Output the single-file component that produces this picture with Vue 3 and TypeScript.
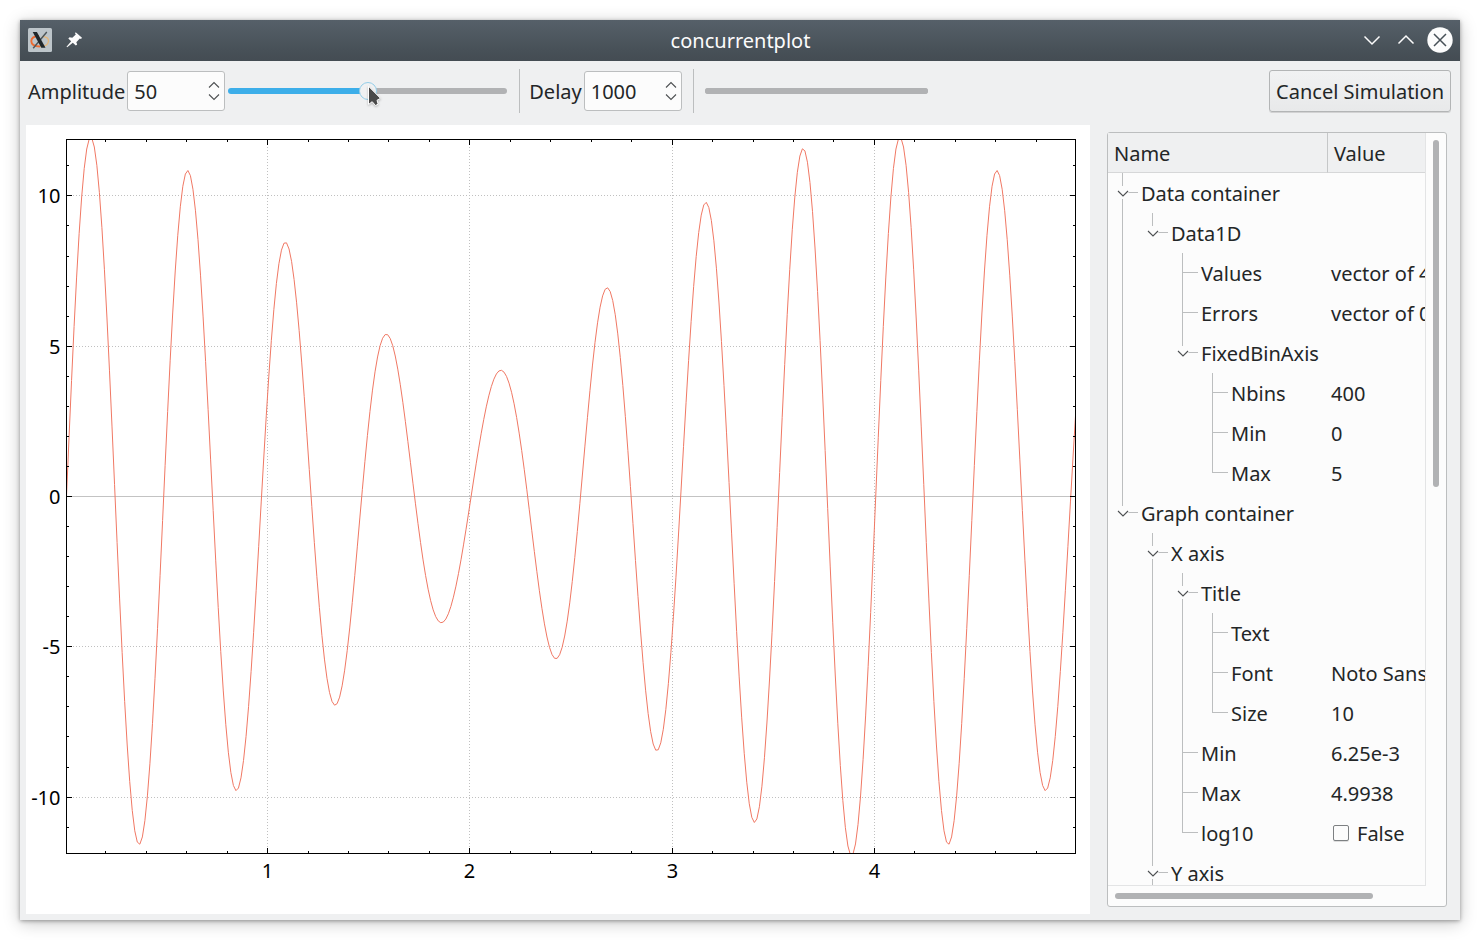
<script setup lang="ts">
import { computed, onBeforeUnmount, onMounted, ref } from 'vue'

interface TreeNode {
  name: string
  value?: string
  check?: boolean
  last?: boolean
  children?: TreeNode[]
}

interface TreeRow {
  name: string
  value: string
  check: boolean
  depth: number
  expandable: boolean
  branches: string
}

const amplitude = ref(50)
const delay = ref(1000)
const log10 = ref(false)

const tree: TreeNode[] = [
  {
    name: 'Data container',
    children: [
      {
        name: 'Data1D',
        last: true,
        children: [
          { name: 'Values', value: 'vector of 400' },
          { name: 'Errors', value: 'vector of 0' },
          {
            name: 'FixedBinAxis',
            last: true,
            children: [
              { name: 'Nbins', value: '400' },
              { name: 'Min', value: '0' },
              { name: 'Max', value: '5', last: true },
            ],
          },
        ],
      },
    ],
  },
  {
    name: 'Graph container',
    last: true,
    children: [
      {
        name: 'X axis',
        children: [
          {
            name: 'Title',
            children: [
              { name: 'Text' },
              { name: 'Font', value: 'Noto Sans' },
              { name: 'Size', value: '10', last: true },
            ],
          },
          { name: 'Min', value: '6.25e-3' },
          { name: 'Max', value: '4.9938' },
          { name: 'log10', value: 'False', check: true, last: true },
        ],
      },
      { name: 'Y axis', children: [] },
    ],
  },
]

const INDENT = 30

function flatten(nodes: TreeNode[], open: boolean[] = []): TreeRow[] {
  return nodes.flatMap((node) => {
    const depth = open.length
    const own = depth * INDENT + 14.5
    const expandable = node.children !== undefined
    let d = ''
    open.forEach((continues, level) => {
      if (continues) d += `M${level * INDENT + 14.5} 0V40`
    })
    if (expandable) {
      d += `M${own} 0V13M${own + 6} 19.5H${own + 15.5}`
      if (!node.last) d += `M${own} 26V40`
    } else {
      d += `M${own} 0V${node.last ? 20 : 40}M${own} 19.5H${own + 15.5}`
    }
    const row: TreeRow = {
      name: node.name,
      value: node.value ?? '',
      check: node.check ?? false,
      depth,
      expandable,
      branches: d,
    }
    return [row, ...flatten(node.children ?? [], [...open, !node.last])]
  })
}

const rows = flatten(tree)

const BINS = 400
const BIN_WIDTH = 0.0125
const X_MIN = 0.00625
const X_MAX = 4.99375
const Y_LIMIT = 11.876

const plot = ref<HTMLElement | null>(null)
const width = ref(1064)
const height = ref(789)
let observer: ResizeObserver | undefined

onMounted(() => {
  observer = new ResizeObserver(([entry]) => {
    width.value = Math.round(entry.contentRect.width)
    height.value = Math.round(entry.contentRect.height)
  })
  if (plot.value) observer.observe(plot.value)
})
onBeforeUnmount(() => observer?.disconnect())

const frame = computed(() => ({
  left: 40.5,
  top: 14.5,
  right: width.value - 14.5,
  bottom: height.value - 60.5,
}))

const px = (x: number) =>
  frame.value.left + ((x - X_MIN) / (X_MAX - X_MIN)) * (frame.value.right - frame.value.left)
const py = (y: number) => {
  const { top, bottom } = frame.value
  return (top + bottom) / 2 - (y / Y_LIMIT) * ((bottom - top) / 2)
}
const crisp = (v: number) => Math.floor(v) + 0.5

const xMajor = computed(() => [1, 2, 3, 4].map((v) => ({ v, at: crisp(px(v)) })))
const yMajor = computed(() => [10, 5, 0, -5, -10].map((v) => ({ v, at: crisp(py(v)) })))

const ticks = computed(() => {
  const { left, top, right, bottom } = frame.value
  let d = ''
  for (let i = 1; i < 25; i++) {
    const at = crisp(px(i / 5))
    const len = i % 5 === 0 ? 5 : 2
    d += `M${at} ${top}v${len + 0.5}M${at} ${bottom}v${-len - 0.5}`
  }
  for (let i = -11; i <= 11; i++) {
    const at = crisp(py(i))
    const len = i % 5 === 0 ? 5 : 2
    d += `M${left} ${at}h${len + 0.5}M${right} ${at}h${-len - 0.5}`
  }
  return d
})

const grid = computed(() => {
  const { left, top, right, bottom } = frame.value
  const vertical = xMajor.value.map((t) => `M${t.at} ${bottom - 0.5}V${top}`)
  const horizontal = yMajor.value.filter((t) => t.v !== 0).map((t) => `M${left + 0.5} ${t.at}H${right}`)
  return [...vertical, ...horizontal].join('')
})

// Values are sampled at the lower edge of each bin and drawn at its centre.
const curve = computed(() => {
  const scale = amplitude.value / 50
  const points: string[] = []
  for (let i = 0; i < BINS; i++) {
    const x = i * BIN_WIDTH
    const y = scale * (8 * Math.sin(4 * Math.PI * x) + 4 * Math.sin(4.5 * Math.PI * x))
    points.push(`${px(x + BIN_WIDTH / 2).toFixed(2)},${py(y).toFixed(2)}`)
  }
  return points.join(' ')
})
</script>

<template>
  <div class="desktop">
    <main class="window">
      <header class="titlebar">
        <svg class="app-icon" viewBox="0 0 24 24" aria-hidden="true">
          <rect width="24" height="24" rx="1.500" fill="#bdc5ca" />
          <path d="M11 8C6 8 3.300 10 3.300 13S6 18.300 12 18.500" fill="none" stroke="#ee6b32" stroke-width="1.900" />
          <path d="M14 8.500C18.500 8.500 21 10.500 20.500 13.500S17 18.500 12 18.500" fill="none" stroke="#e5b77c" stroke-width="1.400" />
          <path d="M18.800 4 5.200 20.300" stroke="#4b5459" stroke-width="1.400" />
          <path d="M4.700 4h4.200l8.600 15.800h-4.200z" fill="#20272b" />
        </svg>
        <svg class="pin-icon" viewBox="0 0 16 16" aria-hidden="true">
          <path
            d="M9.700.3 16 5.700 15 6.900 13.800 6.500 10.300 10.200 11.200 12.500 9.800 13.600 6.800 10.700 1.200 15.300.5 14.700 5.200 9.300 2.300 6.500 3.600 5.200 6.300 5.800 9.800 2.600 9 1.300z"
            fill="#fcfcfc"
          />
        </svg>
        <h1>concurrentplot</h1>
        <div class="window-buttons">
          <button type="button" aria-label="Minimize">
            <svg viewBox="0 0 26 26"><path d="m5.500 9.500 7.500 7.500 7.500-7.500" /></svg>
          </button>
          <button type="button" aria-label="Maximize">
            <svg viewBox="0 0 26 26"><path d="m5.500 16.500 7.500-7.500 7.500 7.500" /></svg>
          </button>
          <button type="button" aria-label="Close">
            <svg viewBox="0 0 26 26">
              <circle cx="13" cy="13" r="12.700" fill="#fcfcfc" />
              <path class="close-cross" d="m7 7 12 12M19 7 7 19" />
            </svg>
          </button>
        </div>
      </header>

      <div class="toolbar">
        <label for="amplitude">Amplitude</label>
        <div class="spin">
          <input id="amplitude" v-model.number="amplitude" type="number" min="0" max="100" />
          <div class="steps">
            <button type="button" aria-label="Increase amplitude" @click="amplitude++">
              <svg viewBox="0 0 12 8"><path d="m1 6.500 5-5 5 5" /></svg>
            </button>
            <button type="button" aria-label="Decrease amplitude" @click="amplitude--">
              <svg viewBox="0 0 12 8"><path d="m1 1.500 5 5 5-5" /></svg>
            </button>
          </div>
        </div>
        <div class="slider">
          <input
            v-model.number="amplitude"
            type="range"
            min="0"
            max="100"
            aria-label="Amplitude slider"
            :style="{ '--fill': amplitude + '%' }"
          />
          <svg class="pointer" viewBox="0 0 16 24" aria-hidden="true">
            <path
              d="M1.500 2.200V20.500L5.200 17.700 8.500 21.500 11.200 20.200 10 16.300 13.500 14.300z"
              fill="#4a4a4a"
              stroke="#fff"
              stroke-width="1"
            />
          </svg>
        </div>
        <span class="separator first"></span>
        <label for="delay">Delay</label>
        <div class="spin">
          <input id="delay" v-model.number="delay" type="number" min="0" max="10000" />
          <div class="steps">
            <button type="button" aria-label="Increase delay" @click="delay++">
              <svg viewBox="0 0 12 8"><path d="m1 6.500 5-5 5 5" /></svg>
            </button>
            <button type="button" aria-label="Decrease delay" @click="delay--">
              <svg viewBox="0 0 12 8"><path d="m1 1.500 5 5 5-5" /></svg>
            </button>
          </div>
        </div>
        <span class="separator second"></span>
        <progress value="0" max="100" aria-label="Simulation progress"></progress>
        <button class="cancel" type="button">Cancel Simulation</button>
      </div>

      <div class="content">
        <section ref="plot" class="plot" aria-label="Plot">
          <svg :viewBox="`0 0 ${width} ${height}`" :width="width" :height="height">
            <defs>
              <clipPath id="plot-area">
                <rect
                  :x="frame.left"
                  :y="frame.top"
                  :width="frame.right - frame.left"
                  :height="frame.bottom - frame.top"
                />
              </clipPath>
            </defs>
            <path class="grid" :d="grid" />
            <path class="zero" :d="`M${frame.left} ${crisp(py(0))}H${frame.right}`" />
            <polyline class="curve" :points="curve" clip-path="url(#plot-area)" />
            <rect
              class="axes"
              :x="frame.left"
              :y="frame.top"
              :width="frame.right - frame.left"
              :height="frame.bottom - frame.top"
            />
            <path class="axes" :d="ticks" />
            <text v-for="t in xMajor" :key="'x' + t.v" :x="t.at" :y="frame.bottom + 24.500" text-anchor="middle">
              {{ t.v }}
            </text>
            <text v-for="t in yMajor" :key="'y' + t.v" :x="frame.left - 6" :y="t.at + 7" text-anchor="end">
              {{ t.v }}
            </text>
          </svg>
        </section>

        <aside class="panel">
          <div class="view">
            <table>
              <colgroup>
                <col class="name-col" />
                <col />
              </colgroup>
              <thead>
                <tr>
                  <th scope="col">Name</th>
                  <th scope="col">Value</th>
                </tr>
              </thead>
              <tbody>
                <tr v-for="(row, i) in rows" :key="i">
                  <td>
                    <div class="cell">
                      <svg
                        :width="(row.depth + 1) * INDENT"
                        height="40"
                        :viewBox="`0 0 ${(row.depth + 1) * INDENT} 40`"
                        aria-hidden="true"
                      >
                        <path class="branch" :d="row.branches" />
                        <path
                          v-if="row.expandable"
                          class="chevron"
                          :d="`M${row.depth * INDENT + 10} 18l5 5 5-5`"
                        />
                      </svg>
                      <span>{{ row.name }}</span>
                    </div>
                  </td>
                  <td>
                    <label v-if="row.check" class="cell check">
                      <input v-model="log10" type="checkbox" />
                      <span>{{ log10 ? 'True' : 'False' }}</span>
                    </label>
                    <div v-else class="cell">
                      <span>{{ row.value }}</span>
                    </div>
                  </td>
                </tr>
              </tbody>
            </table>
          </div>
          <div class="vbar"><div class="thumb"></div></div>
          <div class="hbar"><div class="thumb"></div></div>
        </aside>
      </div>
    </main>
  </div>
</template>

<style>
body {
  margin: 0;
  background: #fff;
}
</style>

<style scoped>
* {
  box-sizing: border-box;
}

.desktop {
  display: flex;
  height: 100vh;
  padding: 20px;
  color: #232627;
  font: 20px/28px 'Noto Sans', sans-serif;
}

button,
input {
  margin: 0;
  color: inherit;
  font: inherit;
}

svg {
  display: block;
}

.window {
  display: flex;
  flex: 1;
  flex-direction: column;
  min-width: 0;
  background: #eff0f1;
  box-shadow:
    0 1px 4px rgba(0, 0, 0, 0.35),
    0 3px 16px rgba(0, 0, 0, 0.22);
}

.titlebar {
  display: grid;
  grid-template-columns: 24px 1fr auto 1fr;
  align-items: center;
  height: 41px;
  padding: 0 7px 1px 8px;
  color: #fcfcfc;
  background: linear-gradient(#566069, #475057 75%, #444c53);
}

.app-icon {
  width: 24px;
  height: 24px;
}

.pin-icon {
  width: 16px;
  height: 16px;
  margin-left: 14px;
}

h1 {
  margin: 0;
  padding: 2px 24px 0 0;
  font-size: 20px;
  font-weight: 400;
  line-height: 28px;
}

.window-buttons {
  display: flex;
  gap: 8px;
  justify-content: flex-end;
}

.window-buttons button {
  width: 26px;
  height: 26px;
  padding: 0;
  background: none;
  border: 0;
}

.window-buttons path {
  fill: none;
  stroke: #fcfcfc;
  stroke-width: 1.5;
}

.window-buttons .close-cross {
  stroke: #475057;
}

.toolbar {
  display: flex;
  align-items: center;
  height: 64px;
  padding: 0 9px 4px 8px;
}

.toolbar label {
  padding-top: 2px;
  white-space: nowrap;
}

.spin {
  display: flex;
  width: 98px;
  height: 40px;
  margin-left: 2px;
  background: #fcfcfc;
  border: 1px solid #bcbebf;
  border-radius: 3px;
}

.spin input {
  flex: 1;
  min-width: 0;
  padding: 2px 0 0 6px;
  background: none;
  border: 0;
  outline: 0;
  appearance: textfield;
}

.spin input::-webkit-inner-spin-button {
  display: none;
}

.steps {
  display: flex;
  flex-direction: column;
  gap: 4px;
  justify-content: center;
  padding-right: 4px;
}

.steps button {
  width: 12px;
  height: 8px;
  padding: 0;
  background: none;
  border: 0;
}

.steps path,
.chevron {
  fill: none;
  stroke: #4d5052;
  stroke-width: 1.1;
}

.slider {
  position: relative;
  flex: 0 1 279px;
  margin-left: 3px;
}

.slider input {
  display: block;
  width: 100%;
  height: 18px;
  background: none;
  appearance: none;
}

.slider input::-webkit-slider-runnable-track {
  height: 6px;
  background: linear-gradient(to right, #3daee9 var(--fill), #b1b2b4 var(--fill));
  border-radius: 3px;
}

.slider input::-webkit-slider-thumb {
  width: 18px;
  height: 18px;
  margin-top: -6px;
  background: #f0f1f2;
  border: 1px solid #93cee9;
  border-radius: 50%;
  appearance: none;
}

.pointer {
  position: absolute;
  top: 2px;
  left: 139px;
  width: 16px;
  height: 24px;
  filter: drop-shadow(0 1px 1px rgba(0, 0, 0, 0.25));
  pointer-events: none;
}

.separator {
  width: 1px;
  height: 44px;
  background: #bcbebf;
}

.first {
  margin: 0 9px 0 12px;
}

.second {
  margin: 0 11px;
}

progress {
  flex: 0 1 223px;
  width: 223px;
  height: 6px;
  background: #b1b2b4;
  border: 0;
  border-radius: 3px;
  appearance: none;
}

progress::-webkit-progress-bar {
  background: #b1b2b4;
  border-radius: 3px;
}

progress::-webkit-progress-value {
  background: #3daee9;
}

.cancel {
  height: 42px;
  margin-left: auto;
  padding: 2px 6px 0;
  white-space: nowrap;
  background: linear-gradient(#f1f2f3, #e8e9ea);
  border: 1px solid #b3b5b6;
  border-radius: 3px;
  box-shadow: 0 1px 0 rgba(0, 0, 0, 0.12);
}

.content {
  display: flex;
  flex: 1;
  gap: 17px;
  min-height: 0;
  padding: 0 13px 6px 6px;
}

.plot {
  flex: 1;
  min-width: 0;
  overflow: hidden;
  background: #fff;
}

.plot text {
  fill: #000;
}

.grid,
.zero,
.axes,
.curve {
  fill: none;
  stroke-width: 1;
}

.grid {
  stroke: #c0c0c0;
  stroke-dasharray: 1 2;
}

.zero {
  stroke: #c3c3c3;
}

.axes {
  stroke: #000;
}

.curve {
  stroke: #f07864;
}

.panel {
  display: grid;
  flex: 0 0 340px;
  grid-template-rows: minmax(0, 1fr) 20px;
  grid-template-columns: minmax(0, 1fr) 20px;
  margin: 7px 0;
  background: #fcfcfc;
  border: 1px solid #bcbebf;
  border-radius: 3px;
}

.view {
  overflow: hidden;
  border-right: 1px solid #e3e4e5;
  border-bottom: 1px solid #e3e4e5;
}

table {
  width: 400px;
  table-layout: fixed;
  border-spacing: 0;
}

.name-col {
  width: 220px;
}

th {
  height: 40px;
  padding: 2px 6px 0;
  font-weight: 400;
  text-align: left;
  background: #eff0f1;
  border-right: 1px solid #c5c7c8;
  border-bottom: 1px solid #d6d7d8;
}

td {
  height: 40px;
  padding: 0;
}

.cell {
  display: flex;
  align-items: center;
  height: 40px;
  white-space: nowrap;
}

.cell span {
  padding: 2px 3px 0;
}

.branch {
  fill: none;
  stroke: #bcbebf;
  stroke-width: 1;
}

.check {
  padding-left: 5px;
}

.check input {
  width: 16px;
  height: 16px;
  margin-right: 5px;
  background: #fcfcfc;
  border: 1px solid #7d8082;
  border-radius: 2px;
  box-shadow: 0 1px 0 rgba(0, 0, 0, 0.12);
  appearance: none;
}

.check input:checked {
  background: #3daee9;
}

.thumb {
  background: #b1b2b4;
  border-radius: 3px;
}

.vbar,
.hbar {
  padding: 7px;
}

.vbar .thumb {
  width: 6px;
  height: 47%;
}

.hbar .thumb {
  width: 85%;
  height: 6px;
}
</style>
